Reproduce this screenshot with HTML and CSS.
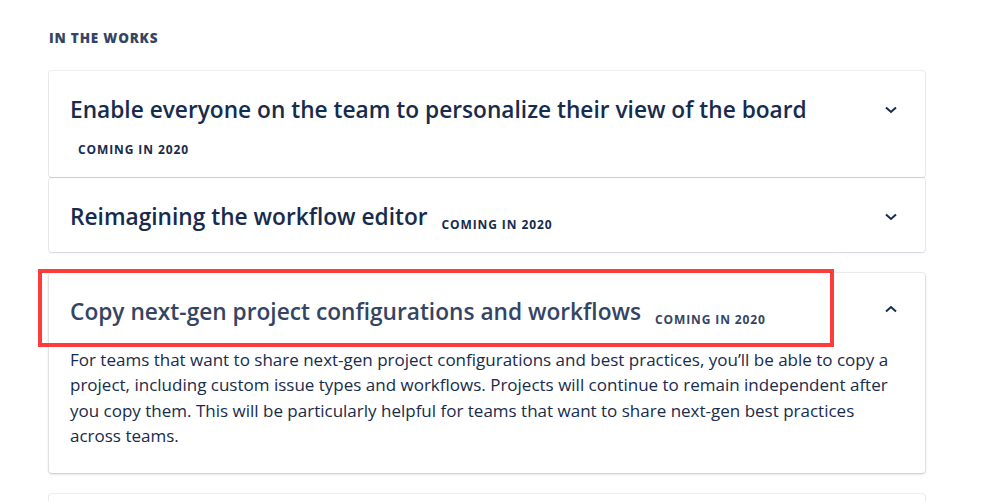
FILE: index.html
```html
<!DOCTYPE html>
<html>
<head>
<meta charset="utf-8">
<link rel="stylesheet" href="styles.css">
</head>
<body>
<main class="page">
  <h2 class="section-label">IN THE WORKS</h2>
  <div class="list">
    <div class="card">
      <div class="card-head">
        <h3 class="title">Enable everyone on the team to personalize their view of the board <span class="badge">COMING IN 2020</span></h3>
        <svg class="chev" viewBox="0 0 12 8" width="12" height="8"><path d="M1 1.5 L6 6 L11 1.5" fill="none" stroke="#172B4D" stroke-width="2"/></svg>
      </div>
    </div>
    <div class="card">
      <div class="card-head">
        <h3 class="title">Reimagining the workflow editor <span class="badge">COMING IN 2020</span></h3>
        <svg class="chev" viewBox="0 0 12 8" width="12" height="8"><path d="M1 1.5 L6 6 L11 1.5" fill="none" stroke="#172B4D" stroke-width="2"/></svg>
      </div>
    </div>
    <div class="card card-open">
      <div class="card-head">
        <h3 class="title title-open">Copy next-gen project configurations and workflows <span class="badge badge-open">COMING IN 2020</span></h3>
        <svg class="chev chev-up" viewBox="0 0 12 8" width="12" height="8"><path d="M1 6.5 L6 2 L11 6.5" fill="none" stroke="#172B4D" stroke-width="2"/></svg>
      </div>
      <p class="body">For teams that want to share next-gen project configurations and best practices, you’ll be able to copy a project, including custom issue types and workflows. Projects will continue to remain independent after you copy them. This will be particularly helpful for teams that want to share next-gen best practices across teams.</p>
      <div class="highlight"></div>
    </div>
    <div class="card card-next"></div>
  </div>
</main>
</body>
</html>
```

FILE: styles.css
```css
html, body {
  margin: 0;
  padding: 0;
  background: #ffffff;
}
body {
  font-family: "Open Sans", "Noto Sans", sans-serif;
  color: #172B4D;
  overflow: hidden;
  height: 501px;
}
.page {
  padding: 30px 74px 0 49px;
}
.section-label {
  margin: 0 0 25px 0;
  font-family: "Open Sans", sans-serif;
  font-weight: 800;
  font-size: 13.5px;
  line-height: 16px;
  letter-spacing: 0.8px;
  color: #344563;
}
.list {
  display: flex;
  flex-direction: column;
}
.card {
  position: relative;
  background: #fff;
  border-radius: 3px;
  box-shadow: 0 0 0 1px rgba(9, 30, 66, 0.07), 0 1px 2px rgba(9, 30, 66, 0.12);
  padding: 23px 22px 19px 21px;
}
.card + .card {
  margin-top: 1px;
}
.card-open {
  margin-top: 21px !important;
  margin-bottom: 20px;
  box-shadow: 0 0 0 1px rgba(9, 30, 66, 0.06), 0 1px 3px rgba(9, 30, 66, 0.22);
  padding-bottom: 25px;
}
.card-next {
  height: 60px;
}
.card-head {
  display: flex;
  align-items: flex-start;
  justify-content: space-between;
}
.title {
  margin: 0;
  font-size: 22.7px;
  font-weight: 600;
  line-height: 32px;
  color: #172B4D;
  max-width: 780px;
}
.title-open {
  color: #344563;
}
.badge {
  display: inline-block;
  margin-left: 8px;
  font-size: 12px;
  font-weight: 700;
  line-height: 1;
  letter-spacing: 0.9px;
  color: #172B4D;
  vertical-align: -4px;
}
.badge-open {
  color: #344563;
}
.chev {
  flex: none;
  margin-top: 12px;
  margin-right: 6px;
}
.chev-up {
  margin-top: 9px;
}
.body {
  margin: 19px 0 0 0;
  font-size: 17px;
  line-height: 25.3px;
  color: #172B4D;
  max-width: 830px;
}
.highlight {
  position: absolute;
  left: -11px;
  top: -4px;
  width: 788px;
  height: 70px;
  border: 4px solid #FF3B3B;
  pointer-events: none;
}
```
